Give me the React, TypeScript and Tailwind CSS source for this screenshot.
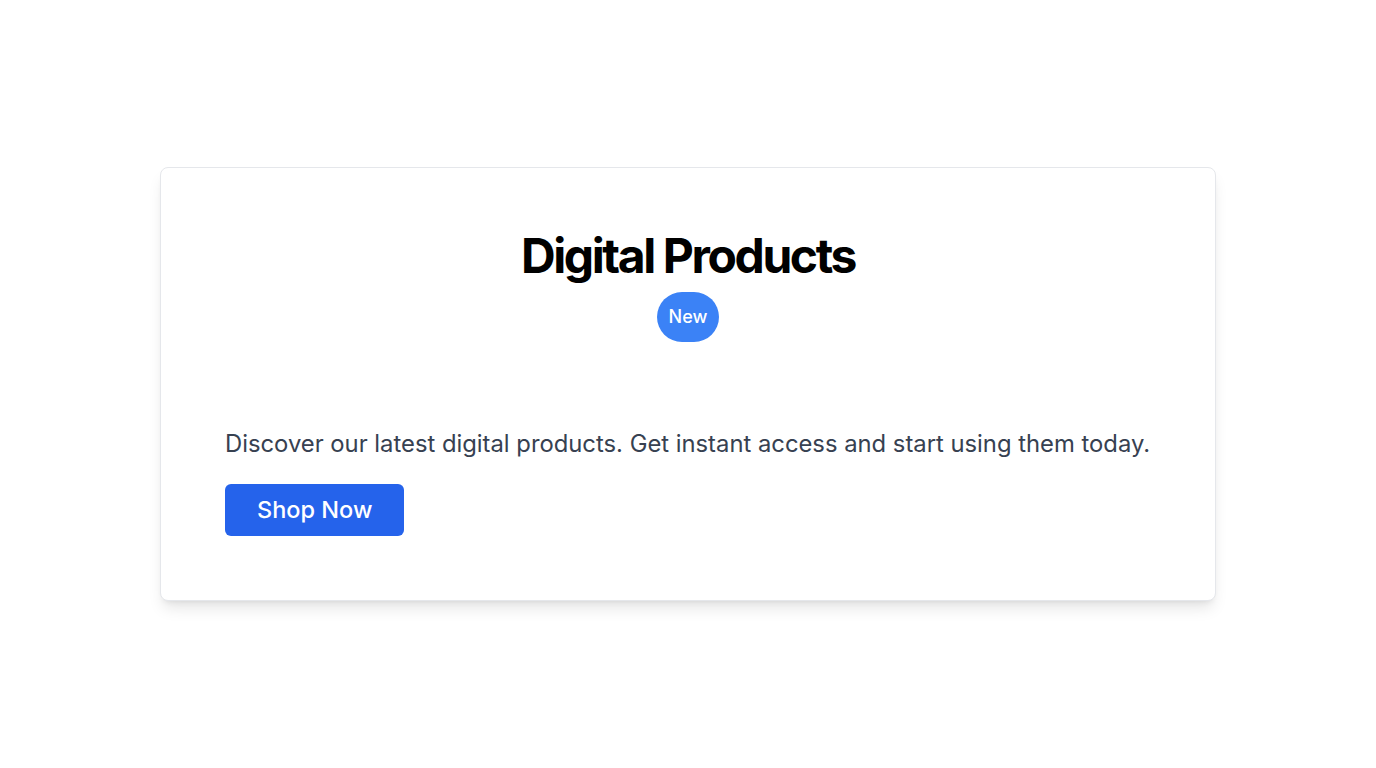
import React from "react";

export default function App() {
  return (
    <div className="min-h-screen w-full bg-white flex items-center justify-center" style={{ fontFamily: "Inter, 'Noto Sans', sans-serif" }}>
      <div className="w-[1056px] rounded-lg border border-gray-200 bg-white p-16 shadow-lg">
        <div className="flex flex-col items-center gap-3">
          <h1 className="text-5xl font-bold tracking-tighter text-black">Digital Products</h1>
          <span className="rounded-full bg-[#3b82f6] px-3 py-[11px] text-lg font-medium leading-7 text-white">New</span>
        </div>
        <p className="mt-[86px] mb-6 whitespace-nowrap text-[23.8px] leading-8 text-[#374151]">
          Discover our latest digital products. Get instant access and start using them today.
        </p>
        <button className="rounded-md bg-[#2563eb] px-8 py-2.5 text-[23.5px] leading-8 font-medium text-white">Shop Now</button>
      </div>
    </div>
  );
}
